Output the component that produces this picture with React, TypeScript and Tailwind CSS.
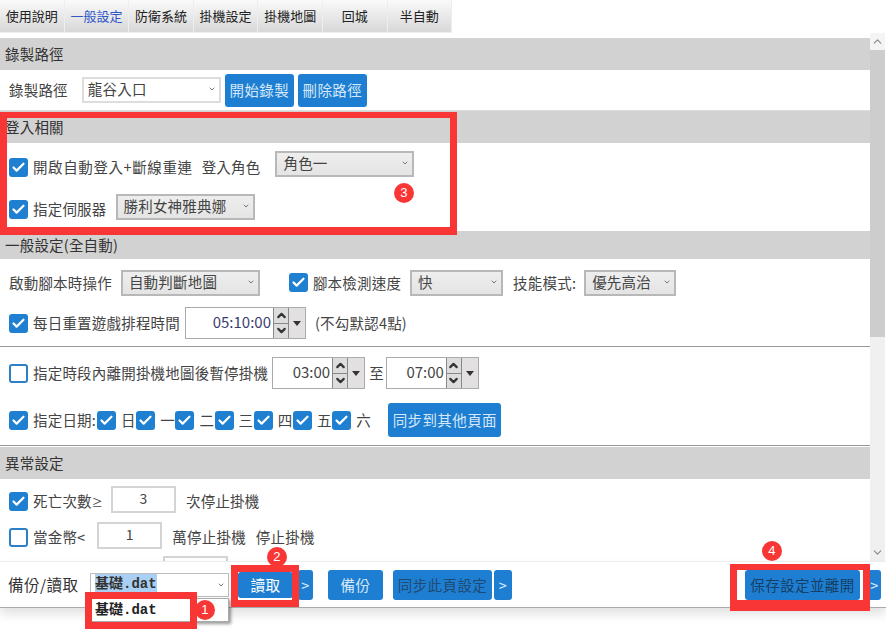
import { Check, ChevronDown, ChevronUp } from "lucide-react"
import type { ReactNode } from "react"

const tabs = ["使用說明", "一般設定", "防衛系統", "掛機設定", "掛機地圖", "回城", "半自動"]
const days = ["日", "一", "二", "三", "四", "五", "六"]

function Box({ checked = true }: { checked?: boolean }) {
  return checked ? (
    <span className="flex h-[19px] w-[19px] shrink-0 items-center justify-center rounded-[3px] bg-[#1f7fd0]">
      <Check size={15} strokeWidth={3.5} className="text-white" />
    </span>
  ) : (
    <span className="h-[19px] w-[19px] shrink-0 rounded-[3px] border-2 border-[#2c80c8] bg-white" />
  )
}

function Select({ value, className }: { value: string; className: string }) {
  return (
    <div
      className={`flex h-[26px] shrink-0 items-start justify-between border-2 border-[#b8b8b8] bg-gradient-to-b from-[#eeeeee] to-[#e4e4e4] pr-[3px] pl-1.5 text-[14.5px] leading-[20px] text-[#444] ${className}`}
    >
      <span>{value}</span>
      <ChevronDown size={8} strokeWidth={3} className="mt-[6px] text-[#777]" />
    </div>
  )
}

function TimeBox({ value, wide = false }: { value: string; wide?: boolean }) {
  return (
    <div className={`flex h-[32px] shrink-0 border border-[#aaa] bg-white ${wide ? "w-[121px]" : "w-[93px]"}`}>
      <span className={`flex-1 pr-0.5 text-right text-[15px] leading-[28px] tracking-normal ${wide ? "text-[#3c3c70] tracking-[-0.5px]" : "text-[#444]"}`}>
        {value}
      </span>
      <div className="flex w-4 flex-col border-x border-[#888] bg-[#ddd]">
        <span className="flex flex-1 items-center justify-center border-b border-[#888]">
          <ChevronUp size={13} strokeWidth={4} className="text-[#333]" />
        </span>
        <span className="flex flex-1 items-center justify-center">
          <ChevronDown size={13} strokeWidth={4} className="text-[#333]" />
        </span>
      </div>
      <span className="flex w-4 items-center justify-center bg-[#e2e0e0]">
        <span className="h-0 w-0 border-x-[4px] border-t-[5px] border-x-transparent border-t-[#333]" />
      </span>
    </div>
  )
}

function Btn({ children, className }: { children: ReactNode; className: string }) {
  return (
    <div className={`flex shrink-0 items-center justify-center rounded-[3px] bg-[#1e7fd2] text-[14.5px] tracking-[0.4px] ${className}`}>
      {children}
    </div>
  )
}

function Header({ children, className }: { children: ReactNode; className: string }) {
  return (
    <div className={`flex items-center bg-[#d2d2d2] pl-[5px] text-[14.5px] text-[#333] ${className}`}>
      {children}
    </div>
  )
}

function NumInput({ value, className }: { value: string; className?: string }) {
  return (
    <div className={`h-[27px] w-[65px] shrink-0 border-2 border-[#d4d4d4] bg-white text-center text-[14px] leading-[21px] text-[#444] ${className ?? ""}`}>
      {value}
    </div>
  )
}

function Callout({ n, className }: { n: string; className: string }) {
  return (
    <span className={`absolute flex h-5 w-5 items-center justify-center rounded-full bg-[#f93636] font-['Liberation_Sans',sans-serif] text-[13px] text-white ${className}`}>
      {n}
    </span>
  )
}

export default function App() {
  return (
    <div className="relative flex h-[630px] w-[886px] flex-col overflow-hidden bg-white font-['Noto_Sans_CJK_TC',sans-serif] text-[14.5px] tracking-[0.2px] text-[#444]">
      {/* tabs */}
      <div className="flex h-[33px] shrink-0">
        {tabs.map((tab, i) => (
          <div
            key={tab}
            className={`flex h-[33px] w-[64.6px] shrink-0 items-center justify-center border-r border-b border-[#eee] bg-gradient-to-b from-[#fafafa] to-[#d8d8d8] text-[13px] tracking-normal ${
              i === 1 ? "text-[#2f57c8]" : "text-[#222]"
            }`}
          >
            {tab}
          </div>
        ))}
      </div>

      <div className="flex h-[528px] shrink-0">
        {/* scroll content */}
        <div className="h-[528px] w-[870px] shrink-0 overflow-hidden pt-[5px]">
          <Header className="h-[32px]">錄製路徑</Header>
          <div className="flex h-[41px] items-center border-b border-[#ddd] pl-[9px]">
            <span>錄製路徑</span>
            <div className="ml-[14px] flex h-[26px] w-[139px] shrink-0 items-start justify-between border-2 border-[#ddd] bg-white pr-[3px] pl-1 text-[14.5px] leading-[20px]">
              <span>龍谷入口</span>
              <ChevronDown size={8} strokeWidth={3} className="mt-[6px] text-[#777]" />
            </div>
            <Btn className="ml-1 h-[33px] w-[69px] text-[#d6e8f8]">開始錄製</Btn>
            <Btn className="ml-1 h-[33px] w-[69px] text-[#d6e8f8]">刪除路徑</Btn>
          </div>

          <Header className="h-[32px]">登入相關</Header>
          <div className="h-[88px] pl-[9px]">
            <div className="flex h-[48px] items-center">
              <Box />
              <span className="ml-[5px] tracking-[0.6px]">開啟自動登入+斷線重連</span>
              <span className="ml-[9px]">登入角色</span>
              <Select value="角色一" className="mb-[6px] ml-[15px] w-[139px]" />
            </div>
            <div className="flex h-[36px] items-center">
              <Box />
              <span className="ml-[5px]">指定伺服器</span>
              <Select value="勝利女神雅典娜" className="mb-[4px] ml-[9px] w-[139px]" />
            </div>
          </div>

          <Header className="h-[28px]">一般設定(全自動)</Header>
          <div className="h-[88px] border-b border-[#999] pl-[9px]">
            <div className="flex h-[47px] items-center">
              <span>啟動腳本時操作</span>
              <Select value="自動判斷地圖" className="ml-[9px] w-[139px]" />
              <span className="ml-[29px]"><Box /></span>
              <span className="ml-[5px]">腳本檢測速度</span>
              <Select value="快" className="ml-[9px] w-[93px]" />
              <span className="ml-[10px]">技能模式:</span>
              <Select value="優先高治" className="ml-[8px] w-[92px]" />
            </div>
            <div className="flex h-[34px] items-center">
              <Box />
              <span className="ml-[5px]">每日重置遊戲排程時間</span>
              <span className="ml-[5px]"><TimeBox value="05:10:00" wide /></span>
              <span className="ml-[9px]">(不勾默認4點)</span>
            </div>
          </div>

          <div className="h-[99px] border-b border-[#999] pl-[9px]">
            <div className="flex h-[52px] items-center">
              <Box checked={false} />
              <span className="ml-[5px]">指定時段內離開掛機地圖後暫停掛機</span>
              <span className="ml-[4px]"><TimeBox value="03:00" /></span>
              <span className="ml-[4px]">至</span>
              <span className="ml-[2px]"><TimeBox value="07:00" /></span>
            </div>
            <div className="flex h-[42px] items-center">
              <Box />
              <span className="ml-[5px] w-[64px]">指定日期:</span>
              {days.map((d) => (
                <span key={d} className="flex w-[39.2px] items-center">
                  <Box />
                  <span className="ml-[5px]">{d}</span>
                </span>
              ))}
              <Btn className="ml-[17px] h-[34px] w-[113px] text-[#d6e8f8]">同步到其他頁面</Btn>
            </div>
          </div>

          <div className="h-px" />
          <Header className="h-[32px]">異常設定</Header>
          <div className="pl-[9px]">
            <div className="flex h-[44px] items-center">
              <Box />
              <span className="ml-[5px]">
                死亡次數<span className="text-[11px]">≥</span>
              </span>
              <NumInput value="3" className="mb-[4px] ml-[8px]" />
              <span className="ml-[10px]">次停止掛機</span>
            </div>
            <div className="flex h-[28px] items-center">
              <Box checked={false} />
              <span className="ml-[5px]">當金幣&lt;</span>
              <NumInput value="1" className="mb-[4px] ml-[12px]" />
              <span className="ml-[10px]">萬停止掛機</span>
              <span className="ml-[10px]">停止掛機</span>
            </div>
            <NumInput value="" className="mt-[5px] ml-[154px]" />
          </div>
        </div>

        {/* scrollbar */}
        <div className="flex h-[528px] w-[15px] shrink-0 flex-col bg-[#f0f0f0]">
          <div className="flex h-[17px] items-center justify-center bg-[#f4f4f4]">
            <ChevronUp size={13} className="text-[#888]" />
          </div>
          <div className="h-[287px] bg-[#cdcdcd]" />
          <div className="flex-1" />
          <div className="flex h-[17px] items-center justify-center">
            <ChevronDown size={13} className="text-[#888]" />
          </div>
        </div>
      </div>

      {/* bottom bar */}
      <div className="flex h-[47px] shrink-0 items-center border-t border-b border-t-[#eee] border-b-[#aaa] bg-white pl-2 shadow-[0_6px_10px_rgba(0,0,0,0.12)]">
        <span className="w-[72px] text-[15.5px] tracking-[0.5px] text-[#333]">備份/讀取</span>
        <div className="ml-[10px] flex h-[24px] w-[139px] shrink-0 items-center justify-between border border-[#bbb] bg-white pr-[3px] pl-1">
          <span className="bg-[#a9d0f2] font-['Liberation_Mono','Noto_Sans_CJK_TC',monospace] text-[14px] font-bold tracking-normal text-[#333]">
            基礎.dat
          </span>
          <ChevronDown size={8} strokeWidth={3} className="text-[#777]" />
        </div>
        <Btn className="ml-[9px] h-[26px] w-[55px] text-white">讀取</Btn>
        <Btn className="ml-[5px] h-[30px] w-[15px] text-[12px] text-[#d6e8f8]">&gt;</Btn>
        <Btn className="ml-[15px] h-[30px] w-[55px] text-[#d6e8f8]">備份</Btn>
        <Btn className="ml-[10px] h-[30px] w-[99px] text-[#1f4a73]">同步此頁設定</Btn>
        <Btn className="ml-[2px] h-[30px] w-[18px] text-[12px] text-[#d6e8f8]">&gt;</Btn>
        <Btn className="ml-[233px] h-[30px] w-[115px] text-[#153f66]">保存設定並離開</Btn>
        <Btn className="ml-[8px] h-[30px] w-[13px] text-[12px] text-[#d6e8f8]">&gt;</Btn>
      </div>

      {/* dropdown opened over the bar */}
      <div className="absolute top-[598px] left-[90px] flex h-[24px] w-[139px] items-center border border-[#aaa] bg-white pl-1 font-['Liberation_Mono','Noto_Sans_CJK_TC',monospace] text-[14px] font-bold tracking-normal text-[#222] shadow-[2px_2px_3px_rgba(0,0,0,0.4)]">
        基礎.dat
      </div>

      {/* red annotation frames */}
      <div className="absolute top-[112px] left-0 h-[123px] w-[457px] border-x-[7px] border-t-[6px] border-b-[8px] border-[#f93636]" />
      <div className="absolute top-[565px] left-[231px] h-[42px] w-[68px] border-[7px] border-[#f93636]" />
      <div className="absolute top-[592px] left-[85px] h-[37px] w-[112px] border-[7px] border-[#f93636]" />
      <div className="absolute top-[564px] left-[730px] h-[47px] w-[140px] border-x-[7px] border-t-[6px] border-b-[11px] border-[#f93636]" />

      <Callout n="1" className="top-[600px] left-[195px]" />
      <Callout n="2" className="top-[547px] left-[267px]" />
      <Callout n="3" className="top-[183px] left-[394px]" />
      <Callout n="4" className="top-[541px] left-[762px]" />
    </div>
  )
}
